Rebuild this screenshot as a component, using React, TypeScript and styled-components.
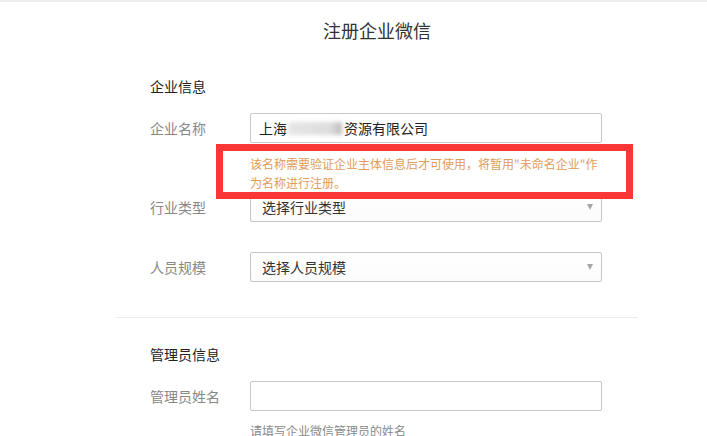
import React from "react";
import styled, { createGlobalStyle } from "styled-components";

const GlobalStyle = createGlobalStyle`
  html, body { margin: 0; padding: 0; background: #fff; }
  body { font-family: "Noto Sans CJK SC", "Noto Sans", sans-serif; }
  * { box-sizing: border-box; }
`;

const Page = styled.div`
  position: relative;
  width: 707px;
  height: 436px;
  overflow: hidden;
  border-top: 2px solid #ededed;
  background: #fff;
`;

const Title = styled.h1`
  margin: 16px 0 0;
  text-align: center;
  font-size: 18px;
  font-weight: 400;
  line-height: 24px;
  color: #333;
`;

const Panel = styled.div`
  margin: 0 69px 0 116px;
`;

const Section = styled.section<{ $top: number }>`
  padding: ${(p) => p.$top}px 0 0 34px;
  display: flex;
  flex-direction: column;
`;

const SectionTitle = styled.h2`
  margin: 0 0 17px;
  font-size: 14px;
  font-weight: 400;
  line-height: 20px;
  color: #222;
`;

const Row = styled.div<{ $gap?: number }>`
  display: grid;
  grid-template-columns: 100px 352px;
  align-items: center;
  margin-top: ${(p) => p.$gap ?? 0}px;
`;

const Label = styled.label`
  font-size: 14px;
  line-height: 20px;
  color: #888;
`;

const TextBox = styled.div`
  height: 30px;
  border: 1px solid #c9c9c9;
  border-radius: 2px;
  background: #fff;
  padding: 0 8px;
  display: flex;
  align-items: center;
  font-size: 14px;
  color: #222;
  white-space: nowrap;
`;

const Blurred = styled.span`
  display: inline-block;
  width: 54px;
  height: 13px;
  margin: 0 2px 0 1px;
  background: linear-gradient(90deg, #e6e6e6 0%, #dcdcdc 80%, #b9b9b9 100%);
  filter: blur(2px);
`;

const SelectBox = styled.div`
  height: 30px;
  border: 1px solid #c6c6c6;
  border-radius: 2px;
  background: linear-gradient(#ffffff, #fbfbfb);
  padding: 0 8px 0 11px;
  display: flex;
  align-items: center;
  justify-content: space-between;
  font-size: 14px;
  color: #333;
`;

const Arrow = styled.span`
  width: 0;
  height: 0;
  border-left: 3.5px solid transparent;
  border-right: 3.5px solid transparent;
  border-top: 6px solid #a6a6a6;
`;

const Note = styled.p<{ $tone: "warn" | "hint"; $top: number }>`
  grid-column: 2;
  margin: ${(p) => p.$top}px 0 0;
  font-size: 12px;
  line-height: 19px;
  color: ${(p) => (p.$tone === "warn" ? "#df9c5a" : "#8a8a8a")};
`;

const Divider = styled.hr`
  margin: 35px 0 0;
  border: 0;
  border-top: 1px solid #ebebeb;
`;

const Highlight = styled.div`
  position: absolute;
  left: 216px;
  top: 142px;
  width: 417px;
  height: 55px;
  border: 7px solid #fb3636;
  pointer-events: none;
`;

const Select = ({ text }: { text: string }) => (
  <SelectBox role="button">
    <span>{text}</span>
    <Arrow />
  </SelectBox>
);

export default function App() {
  return (
    <>
      <GlobalStyle />
      <Page>
        <Panel>
          <Title>注册企业微信</Title>
          <Section $top={34}>
            <SectionTitle>企业信息</SectionTitle>
            <Row>
              <Label>企业名称</Label>
              <TextBox>
                上海<Blurred />资源有限公司
              </TextBox>
              <Note $tone="warn" $top={11}>
                该名称需要验证企业主体信息后才可使用，将暂用"未命名企业"作
                <br />
                为名称进行注册。
              </Note>
            </Row>
            <Row>
              <Label>行业类型</Label>
              <Select text="选择行业类型" />
            </Row>
            <Row $gap={30}>
              <Label>人员规模</Label>
              <Select text="选择人员规模" />
            </Row>
          </Section>
          <Divider />
          <Section $top={26}>
            <SectionTitle>管理员信息</SectionTitle>
            <Row>
              <Label>管理员姓名</Label>
              <TextBox />
              <Note $tone="hint" $top={10}>
                请填写企业微信管理员的姓名
              </Note>
            </Row>
          </Section>
        </Panel>
        <Highlight />
      </Page>
    </>
  );
}
